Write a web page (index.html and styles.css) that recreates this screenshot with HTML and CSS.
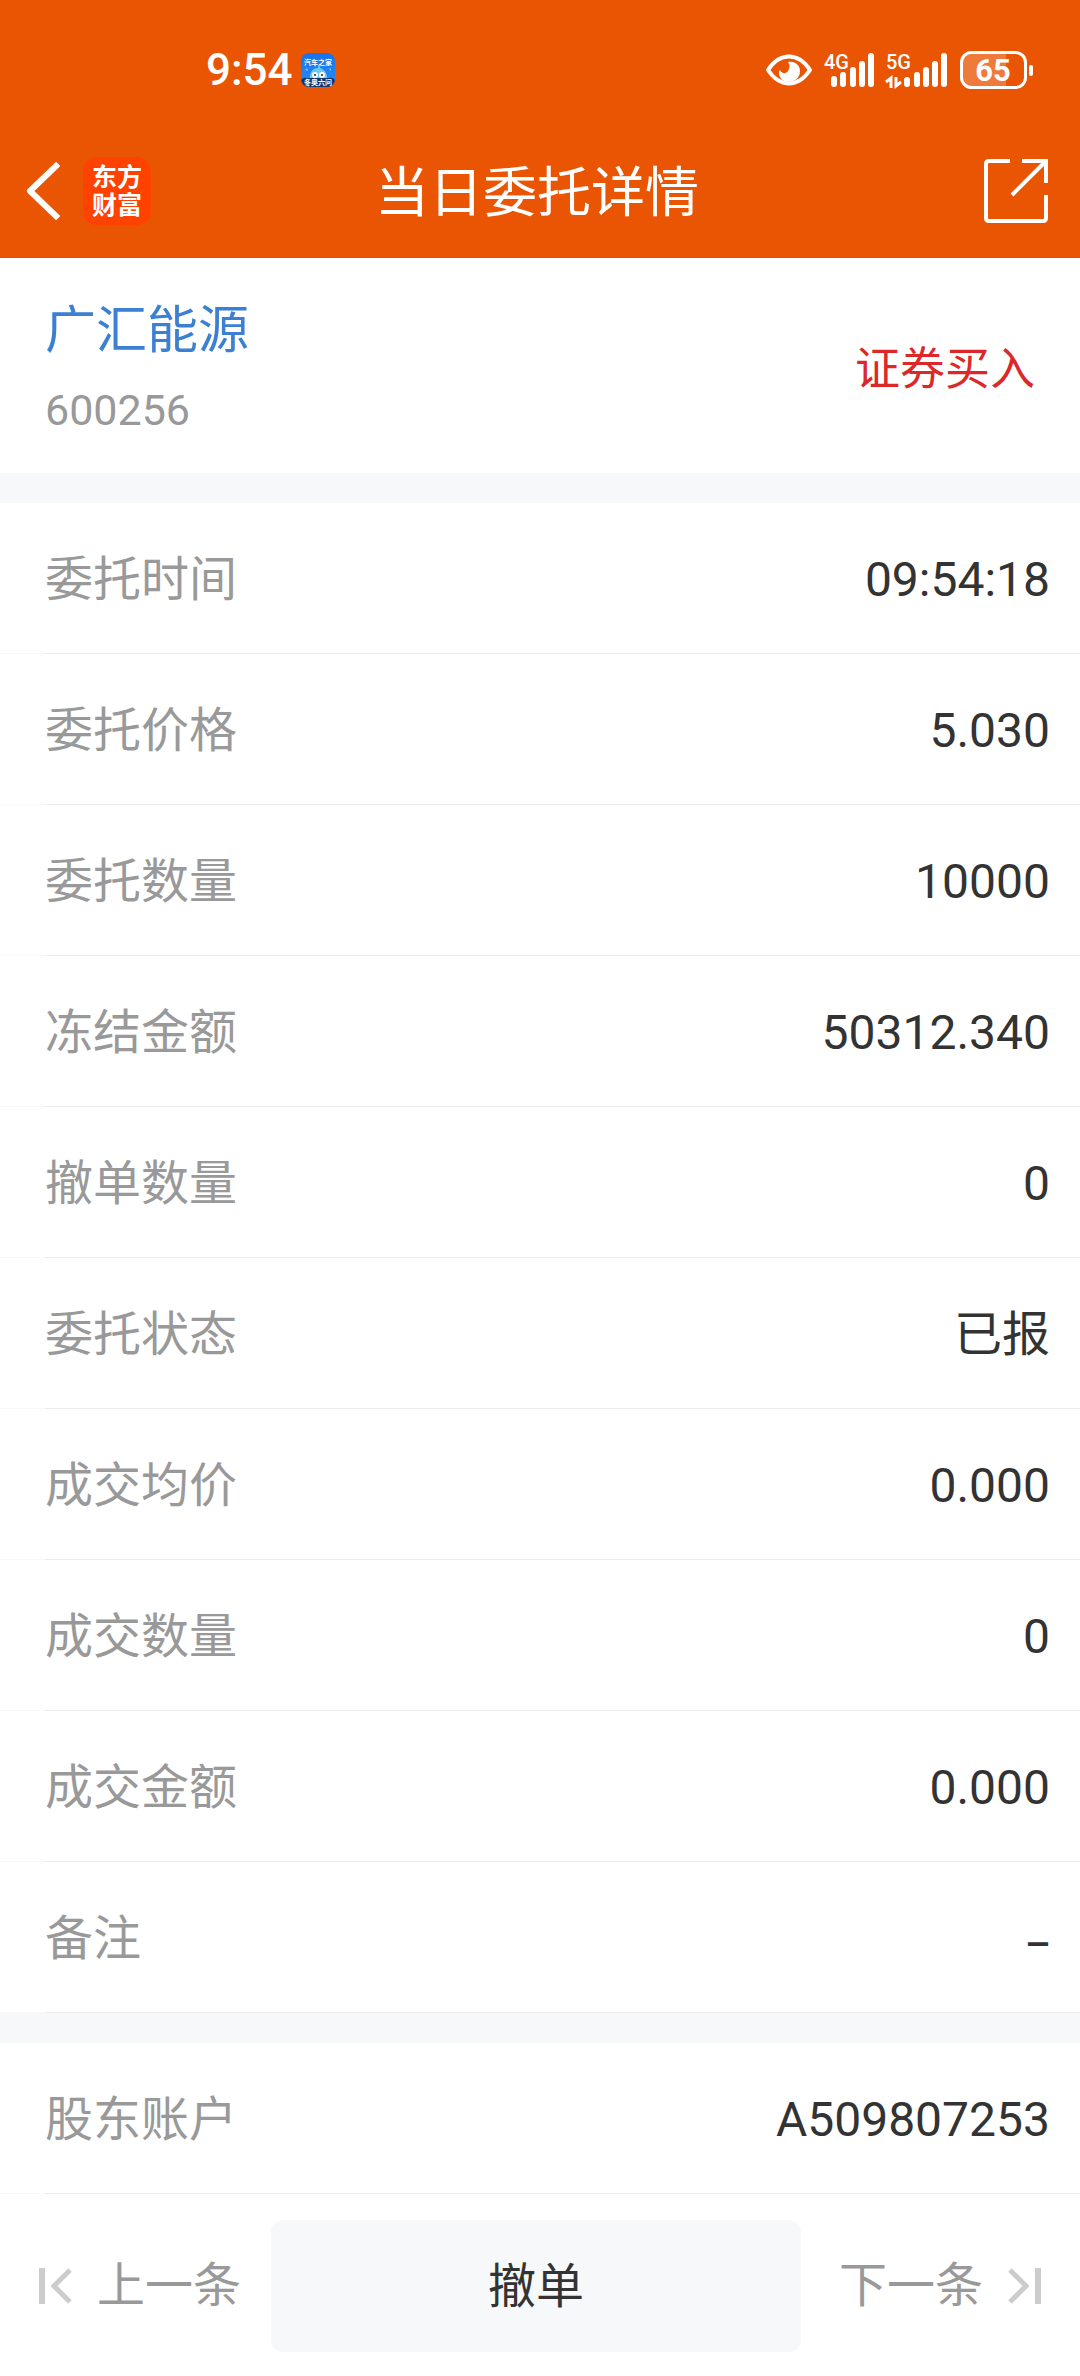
FILE: index.html
```html
<!DOCTYPE html>
<html lang="zh-CN">

<head>
  <meta charset="UTF-8">
  <meta name="viewport" content="width=device-width, initial-scale=1.0">
  <title>当日委托详情</title>
  <link rel="stylesheet" href="styles.css">
</head>

<body>
  <header class="top">
    <div class="status-bar">
      <div class="status-left">
        <span class="clock">9:54</span>
        <svg class="app-icon" width="34" height="34" viewBox="0 0 34 34">
          <defs>
            <linearGradient id="sky" x1="0" y1="0" x2="0" y2="1">
              <stop offset="0" stop-color="#1873ea"/>
              <stop offset="1" stop-color="#2b8cf5"/>
            </linearGradient>
            <clipPath id="tile"><rect width="34" height="34" rx="8"/></clipPath>
          </defs>
          <g clip-path="url(#tile)">
            <rect width="34" height="34" fill="url(#sky)"/>
            <path d="M9 27c-1-8 3-12 8-12s10 4 9 12z" fill="#6cc8f5"/>
            <path d="M16 16l2-4 2 4z" fill="#6cc8f5"/>
            <path d="M4 17l2-2 1 3zM28 16l2-1 0 3z" fill="#7fc4fa"/>
            <ellipse cx="14" cy="22" rx="3" ry="3" fill="#fff"/>
            <ellipse cx="21" cy="22" rx="3" ry="3" fill="#fff"/>
            <circle cx="14" cy="22" r="1" fill="#123"/>
            <circle cx="21" cy="22" r="1" fill="#123"/>
            <path d="M0 27q2-3 6-2h22q4-1 6 2v7H0z" fill="#10346e"/>
          </g>
          <text class="app-name" x="17" y="12">汽车之家</text>
          <text class="app-name" x="17" y="32">冬奥六问</text>
        </svg>
      </div>
      <div class="status-right">
        <svg width="46" height="32" viewBox="0 0 46 32">
          <path d="M2 16C8 7 15 2.500 23 2.500S38 7 44 16C38 25 31 29.500 23 29.500S8 25 2 16z" fill="none" stroke="#fff" stroke-width="4" stroke-linejoin="round"/>
          <path d="M22 8c8-1 12 4 12 9.500S29 28 23 28s-10-4-10-9c0-1 0-2 1-3 2 4 6 4 8 1 2-3 2-6 0-9z" fill="#fff"/>
        </svg>
        <svg width="50" height="36" viewBox="0 0 50 36">
          <path d="M10 27v5M19 23v9M29 18v14M38 12v20M47 4v28" stroke="#fff" stroke-width="6" stroke-linecap="round"/>
          <text class="net" x="0" y="17">4G</text>
        </svg>
        <svg width="62" height="36" viewBox="0 0 62 36">
          <path d="M0 30l5-4v10M10 25v9l5-4" fill="none" stroke="#fff" stroke-width="3"/>
          <path d="M21 28v4M31 23v9M40 18v14M49 12v20M58 4v28" stroke="#fff" stroke-width="6" stroke-linecap="round"/>
          <text class="net" x="0" y="17">5G</text>
        </svg>
        <svg width="74" height="38" viewBox="0 0 74 38">
          <path d="M46 2H12Q2 2 2 12v14q0 10 10 10h34z" fill="#fff" fill-opacity=".22"/>
          <rect x="1.500" y="1.500" width="64" height="35" rx="10" fill="none" stroke="#fff" stroke-width="3"/>
          <rect x="69" y="14" width="4" height="11" rx="2" fill="#fff"/>
          <text class="battery" x="33" y="30">65</text>
        </svg>
      </div>
    </div>

    <div class="nav">
      <div class="nav-left">
        <button class="icon-btn" aria-label="返回">
          <svg width="34" height="56" viewBox="0 0 34 56">
            <path d="M30 3L4 28l26 25" fill="none" stroke="#fff" stroke-width="6" stroke-linejoin="round" stroke-linecap="square"/>
          </svg>
        </button>
        <div class="logo">东方<br>财富</div>
      </div>
      <h1>当日委托详情</h1>
      <button class="icon-btn" aria-label="分享">
        <svg width="64" height="64" viewBox="0 0 64 64" fill="none" stroke="#fff" stroke-width="4">
          <path d="M26 2H5Q2 2 2 5v54q0 3 3 3h54q3 0 3-3V36"/>
          <path d="M38 2h24v22M62 2L28 36"/>
        </svg>
      </button>
    </div>
  </header>

  <main>
    <section class="stock">
      <div>
        <h2>广汇能源</h2>
        <p class="code">600256</p>
      </div>
      <span class="side">证券买入</span>
    </section>

    <dl class="list">
      <div class="row"><dt>委托时间</dt><dd>09:54:18</dd></div>
      <div class="row"><dt>委托价格</dt><dd>5.030</dd></div>
      <div class="row"><dt>委托数量</dt><dd>10000</dd></div>
      <div class="row"><dt>冻结金额</dt><dd>50312.340</dd></div>
      <div class="row"><dt>撤单数量</dt><dd>0</dd></div>
      <div class="row"><dt>委托状态</dt><dd>已报</dd></div>
      <div class="row"><dt>成交均价</dt><dd>0.000</dd></div>
      <div class="row"><dt>成交数量</dt><dd>0</dd></div>
      <div class="row"><dt>成交金额</dt><dd>0.000</dd></div>
      <div class="row"><dt>备注</dt><dd class="empty">–</dd></div>
    </dl>

    <dl class="list">
      <div class="row"><dt>股东账户</dt><dd>A509807253</dd></div>
    </dl>
  </main>

  <footer class="actions">
    <button class="step">
      <svg width="34" height="36" viewBox="0 0 34 36" fill="none" stroke="#ccc">
        <path d="M3 0v36" stroke-width="6"/>
        <path d="M31 2L15 18l16 16" stroke-width="5"/>
      </svg>
      上一条
    </button>
    <button class="cancel">撤单</button>
    <button class="step">
      下一条
      <svg width="34" height="36" viewBox="0 0 34 36" fill="none" stroke="#ccc">
        <path d="M31 0v36" stroke-width="6"/>
        <path d="M3 2l16 16L3 34" stroke-width="5"/>
      </svg>
    </button>
  </footer>
</body>

</html>
```

FILE: styles.css
```css
* {
  box-sizing: border-box;
}

body {
  margin: 0;
  background-color: #fff;
  color: #333;
  font-family: Roboto, "Noto Sans CJK SC", sans-serif;
  font-size: 48px;
  line-height: 60px;
}

h1, h2, p, dl, dd {
  margin: 0;
  font-weight: 400;
}

svg {
  display: block;
  flex: none;
  overflow: visible;
}

button {
  padding: 0;
  border: none;
  background: none;
  color: inherit;
  font: inherit;
  cursor: pointer;
}

/* orange header */
.top {
  background-color: #ea5504;
  color: #fff;
}

.status-bar {
  display: flex;
  justify-content: space-between;
  align-items: center;
  padding: 40px 46px 24px 206px;
}

.status-left,
.status-right {
  display: flex;
  align-items: center;
}

.status-left {
  gap: 8px;
}

.status-right {
  gap: 12px;
}

.clock {
  font-size: 44px;
  font-weight: 500;
}

.app-name {
  fill: #fff;
  font-size: 7px;
  font-weight: 700;
  text-anchor: middle;
}

.net {
  fill: #fff;
  font-size: 20px;
  font-weight: 500;
}

.battery {
  fill: #fff;
  font-size: 31px;
  font-weight: 700;
  text-anchor: middle;
}

.nav {
  display: grid;
  grid-template-columns: 1fr auto 1fr;
  align-items: center;
  padding: 25px 32px 25px 26px;
}

.nav .icon-btn:last-child {
  justify-self: end;
}

.nav-left {
  display: flex;
  align-items: center;
  gap: 23px;
}

.nav h1 {
  padding-top: 6px;
  font-size: 54px;
  line-height: 78px;
}

.logo {
  width: 68px;
  height: 68px;
  padding: 7px 0 5px;
  border-radius: 14px;
  background-color: #ff4200;
  font-size: 25px;
  font-weight: 700;
  line-height: 28px;
  text-align: center;
}

/* stock name and side */
.stock {
  display: flex;
  justify-content: space-between;
  align-items: center;
  padding: 42px 45px 33px;
}

.stock h2 {
  color: #3c80d2;
  font-size: 51px;
  line-height: 62px;
}

.code {
  padding-top: 18px;
  color: #999;
  font-size: 43px;
}

.side {
  color: #dc2828;
  font-size: 45px;
}

/* order fields */
.list {
  border-top: 30px solid #f6f8fa;
}

.row {
  display: flex;
  justify-content: space-between;
  padding: 47px 30px 44px 45px;
  background: linear-gradient(to right, #f8f8f8 45px, #ebebeb 45px) bottom / 100% 1px no-repeat;
}

.row dt {
  color: #999;
}

.row .empty {
  font-family: "Noto Sans", sans-serif;
}

/* bottom buttons */
.actions {
  display: flex;
  align-items: center;
  gap: 30px;
  padding: 26px 39px 24px;
}

.step {
  display: flex;
  align-items: center;
  gap: 24px;
  color: #999;
}

.cancel {
  flex: 1;
  margin-right: 8px;
  padding: 37px 0 35px;
  border-radius: 12px;
  background-color: #f7f8fa;
}
```
